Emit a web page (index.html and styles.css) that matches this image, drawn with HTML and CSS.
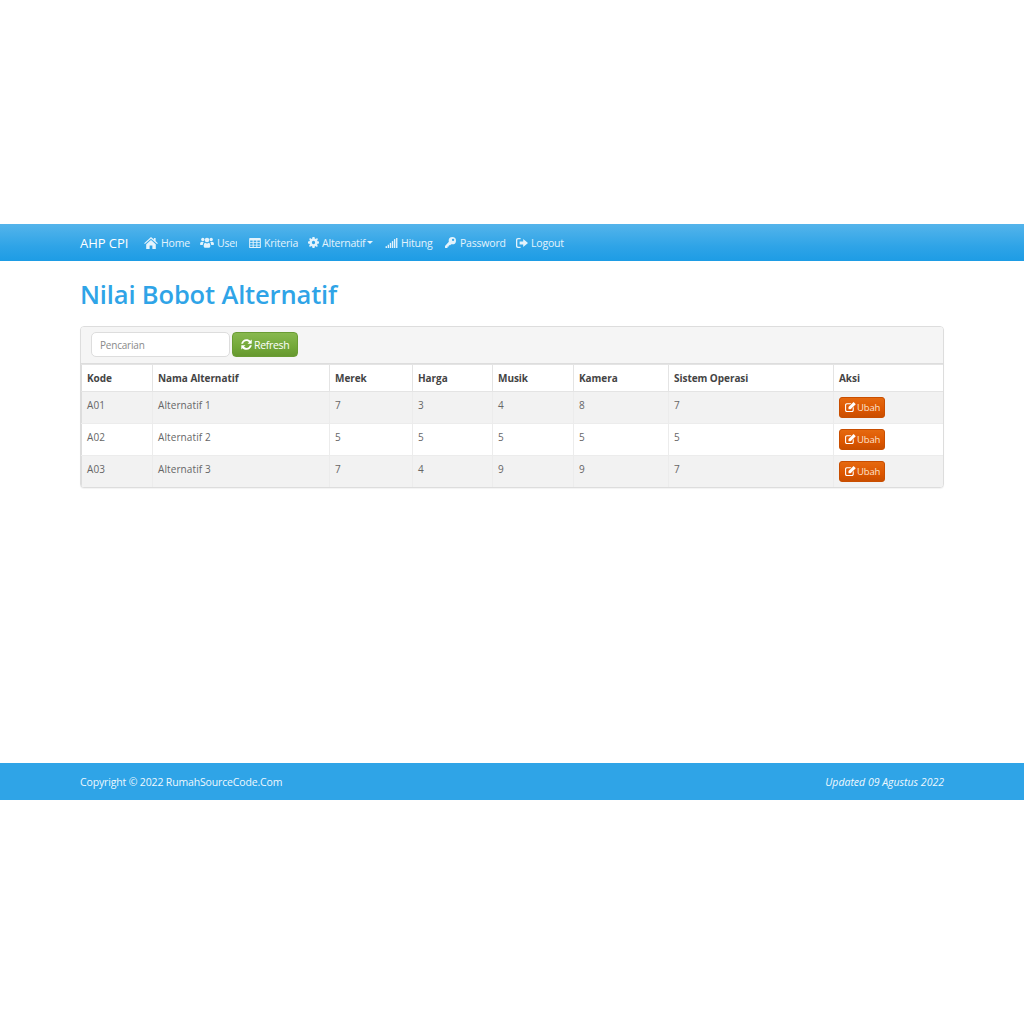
FILE: index.html
```html
<!DOCTYPE html>
<html lang="id">
<head>
<meta charset="utf-8">
<title>Nilai Bobot Alternatif</title>
<link rel="stylesheet" href="styles.css">
</head>
<body>
<svg class="sprite" width="0" height="0" aria-hidden="true">
  <symbol id="i-home" viewBox="0 0 16 14"><path d="M8 0 L11.4 3 V1.2 H13.4 V4.8 L16 7.2 L15.1 8.2 L8 2 L.9 8.2 L0 7.2 Z M2.4 8.4 L8 3.5 L13.6 8.4 V14 H9.6 V10 H6.4 V14 H2.4 Z"/></symbol>
  <symbol id="i-users" viewBox="0 0 16 12"><circle cx="3.2" cy="2.6" r="1.9"/><circle cx="12.8" cy="2.6" r="1.9"/><circle cx="8" cy="3.2" r="2.6"/><path d="M0 8.4 C0 6 1 5.2 2.4 5.2 C3 5.2 3.6 5.8 4.4 6 C3.6 6.8 3.2 7.6 3.2 8.8 H1 C.4 8.8 0 8.8 0 8.4 Z M16 8.4 C16 6 15 5.2 13.6 5.2 C13 5.2 12.4 5.8 11.6 6 C12.4 6.8 12.8 7.6 12.8 8.8 H15 C15.6 8.8 16 8.8 16 8.4 Z M4.2 10 C4.2 7.6 5 6.2 6 6.2 C6.6 6.7 7.2 7 8 7 C8.8 7 9.4 6.7 10 6.2 C11 6.2 11.8 7.6 11.8 10 C11.8 11.4 11 12 10 12 H6 C5 12 4.2 11.4 4.2 10 Z"/></symbol>
  <symbol id="i-table" viewBox="0 0 14 12"><path fill-rule="evenodd" d="M1 0 H13 A1 1 0 0 1 14 1 V11 A1 1 0 0 1 13 12 H1 A1 1 0 0 1 0 11 V1 A1 1 0 0 1 1 0 Z M1.2 3 V5 H4.2 V3 Z M5.4 3 V5 H8.6 V3 Z M9.8 3 V5 H12.8 V3 Z M1.2 6 V8 H4.2 V6 Z M5.4 6 V8 H8.6 V6 Z M9.8 6 V8 H12.8 V6 Z M1.2 9 V10.9 H4.2 V9 Z M5.4 9 V10.9 H8.6 V9 Z M9.8 9 V10.9 H12.8 V9 Z"/></symbol>
  <symbol id="i-cog" viewBox="0 0 12 12"><path fill-rule="evenodd" d="M4.9 0 H7.1 L7.4 1.6 L8.5 2.1 L9.9 1.2 L10.9 2.4 L9.9 3.6 L10.4 4.7 L12 4.9 V7.1 L10.4 7.4 L9.9 8.5 L10.8 9.9 L9.6 10.9 L8.4 9.9 L7.4 10.4 L7.1 12 H4.9 L4.6 10.4 L3.5 9.9 L2.1 10.8 L1.1 9.6 L2.1 8.4 L1.6 7.4 L0 7.1 V4.9 L1.6 4.6 L2.1 3.5 L1.2 2.1 L2.4 1.1 L3.6 2.1 L4.6 1.6 Z M6 4.2 A1.8 1.8 0 1 0 6 7.8 A1.8 1.8 0 1 0 6 4.2 Z"/></symbol>
  <symbol id="i-signal" viewBox="0 0 13 11"><rect x="0" y="9" width="1.5" height="2"/><rect x="2.3" y="7.4" width="1.5" height="3.6"/><rect x="4.6" y="5.4" width="1.5" height="5.6"/><rect x="6.9" y="3.4" width="1.5" height="7.6"/><rect x="9.2" y="1.2" width="1.5" height="9.8"/><rect x="11.5" y="0" width="1.5" height="11"/></symbol>
  <symbol id="i-key" viewBox="0 0 12 12"><path fill-rule="evenodd" d="M8 0 A4 4 0 0 1 8 8 C7.6 8 7.2 7.9 6.8 7.8 L5.6 9 H4.2 V10.4 H2.8 V11.6 L2.4 12 H.4 L0 11.6 V9.8 L4.2 5.2 C4.1 4.8 4 4.4 4 4 A4 4 0 0 1 8 0 Z M8.8 1.8 A1.3 1.3 0 1 0 8.8 4.4 A1.3 1.3 0 1 0 8.8 1.8 Z"/></symbol>
  <symbol id="i-logout" viewBox="0 0 12 10"><path d="M4.6 0 V1.3 H2.2 C1.6 1.3 1.3 1.7 1.3 2.2 V7.8 C1.3 8.3 1.6 8.7 2.2 8.7 H4.6 V10 H2 C.8 10 0 9.2 0 8 V2 C0 .8 .8 0 2 0 Z M7.2 1 L12 5 L7.2 9 V6.6 H3.6 V3.4 H7.2 Z"/></symbol>
  <symbol id="i-refresh" viewBox="0 0 12 12"><path d="M11.7 .6 V5.2 H7.1 L8.8 3.5 C8 2.7 7.1 2.3 6 2.3 C4.2 2.3 2.8 3.4 2.3 5.2 H.2 C.8 2.3 3.1 .2 6 .2 C7.7 .2 9.2 .9 10.3 2 Z M.3 11.4 V6.8 H4.9 L3.2 8.5 C4 9.3 4.9 9.7 6 9.7 C7.8 9.7 9.2 8.6 9.7 6.8 H11.8 C11.2 9.7 8.9 11.8 6 11.8 C4.3 11.8 2.8 11.1 1.7 10 Z"/></symbol>
  <symbol id="i-edit" viewBox="0 0 12 11"><path d="M1.8 1.4 H7 L5.8 2.6 H2.2 C1.6 2.6 1.2 3 1.2 3.6 V8.8 C1.2 9.4 1.6 9.8 2.2 9.8 H7.4 C8 9.8 8.4 9.4 8.4 8.8 V6.6 L9.6 5.4 V9 C9.6 10.2 8.8 11 7.6 11 H1.8 C.8 11 0 10.2 0 9 V3.4 C0 2.2 .8 1.4 1.8 1.4 Z"/><path d="M9.4 0 L11.8 2.4 L6.2 8 H3.8 V5.6 Z"/></symbol>
</svg>

<div class="page">
  <nav class="navbar">
    <div class="container nav-inner">
      <a class="brand">AHP CPI</a>
      <ul class="nav">
        <li class="nav-home"><svg class="ic ic-home"><use href="#i-home"/></svg>Home</li>
        <li class="nav-user"><svg class="ic ic-users"><use href="#i-users"/></svg>User</li>
        <li class="nav-kriteria"><svg class="ic ic-table"><use href="#i-table"/></svg>Kriteria</li>
        <li class="nav-alt"><svg class="ic ic-cog"><use href="#i-cog"/></svg>Alternatif<span class="caret"></span></li>
        <li class="nav-hitung"><svg class="ic ic-signal"><use href="#i-signal"/></svg>Hitung</li>
        <li class="nav-pass"><svg class="ic ic-key"><use href="#i-key"/></svg>Password</li>
        <li class="nav-logout"><svg class="ic ic-logout"><use href="#i-logout"/></svg>Logout</li>
      </ul>
    </div>
  </nav>

  <main class="container content">
    <h1 class="title">Nilai Bobot Alternatif</h1>
    <section class="panel">
      <form class="toolbar">
        <input class="search" type="text" placeholder="Pencarian">
        <a class="btn btn-refresh"><svg class="ic ic-btn"><use href="#i-refresh"/></svg>Refresh</a>
      </form>
      <table class="grid">
        <colgroup>
          <col class="c1"><col class="c2"><col class="c3"><col class="c4"><col class="c5"><col class="c6"><col class="c7"><col class="c8">
        </colgroup>
        <thead>
          <tr><th>Kode</th><th>Nama Alternatif</th><th>Merek</th><th>Harga</th><th>Musik</th><th>Kamera</th><th>Sistem Operasi</th><th>Aksi</th></tr>
        </thead>
        <tbody>
          <tr class="odd"><td>A01</td><td>Alternatif 1</td><td>7</td><td>3</td><td>4</td><td>8</td><td>7</td><td class="act"><a class="btn btn-edit"><svg class="ic ic-edit"><use href="#i-edit"/></svg>Ubah</a></td></tr>
          <tr><td>A02</td><td>Alternatif 2</td><td>5</td><td>5</td><td>5</td><td>5</td><td>5</td><td class="act"><a class="btn btn-edit"><svg class="ic ic-edit"><use href="#i-edit"/></svg>Ubah</a></td></tr>
          <tr class="odd"><td>A03</td><td>Alternatif 3</td><td>7</td><td>4</td><td>9</td><td>9</td><td>7</td><td class="act"><a class="btn btn-edit"><svg class="ic ic-edit"><use href="#i-edit"/></svg>Ubah</a></td></tr>
        </tbody>
      </table>
    </section>
  </main>

  <footer class="footer">
    <div class="container foot-inner">
      <span>Copyright © 2022 RumahSourceCode.Com</span>
      <em class="updated">Updated 09 Agustus 2022</em>
    </div>
  </footer>
</div>
</body>
</html>
```

FILE: styles.css
```css
* { box-sizing: border-box; }
html, body { margin: 0; padding: 0; background: #fff; }
body { font-family: "Open Sans", "Noto Sans", sans-serif; font-size: 10.5px; color: #555; }
.sprite { position: absolute; }
.page { padding-top: 224px; }
.container { width: 864px; margin: 0 auto; }

.navbar { height: 37px; background: linear-gradient(#54b4eb, #2fa4e7 60%, #1d9ce5); color: #fff; }
.nav-inner { display: flex; align-items: center; height: 100%; }
.brand { font-size: 13px; color: #fff; width: 64px; letter-spacing: -.05px; }
.nav { list-style: none; margin: 0; padding: 0; display: flex; align-items: center; color: #e4f3fc; font-size: 10.5px; letter-spacing: -.2px; }
.nav li { display: flex; align-items: center; white-space: nowrap; }
.ic { fill: currentColor; flex: none; }
.ic-home { width: 14px; height: 12px; margin-right: 3px; }
.ic-users { width: 14px; height: 11px; margin-right: 3px; }
.ic-table { width: 12px; height: 10px; margin-right: 3px; }
.ic-cog { width: 11px; height: 11px; margin-right: 3px; }
.ic-signal { width: 13px; height: 10px; margin-right: 3px; }
.ic-key { width: 11px; height: 11px; margin-right: 4px; }
.ic-logout { width: 12px; height: 10px; margin-right: 3px; }
.nav-home { width: 56px; }
.nav-user { width: 37px; margin-right: 12px; overflow: hidden; }
.nav-kriteria { width: 59px; }
.nav-alt { width: 77px; }
.nav-hitung { width: 60px; }
.nav-pass { width: 71px; }
.caret { display: inline-block; margin-left: 2px; border-top: 3px solid currentColor; border-left: 3px solid transparent; border-right: 3px solid transparent; }

.content { padding-top: 17px; }
.title { margin: 0 0 15px; font-size: 25.5px; line-height: 33px; font-weight: 600; color: #2fa4e7; letter-spacing: -.15px; }

.panel { border: 1px solid #ddd; border-radius: 4px; overflow: hidden; height: 162px; background: #fff; box-shadow: 0 1px 1px rgba(0,0,0,.05); }
.toolbar { display: flex; align-items: flex-start; height: 37px; padding: 5px 10px; background: #f5f5f5; border-bottom: 1px solid #ddd; gap: 2px; }
.search { width: 139px; height: 25px; padding: 0 8px; border: 1px solid #ddd; border-radius: 5px; background: #fff; font: 10px "Open Sans", sans-serif; letter-spacing: -.2px; color: #555; }
.search::placeholder { color: #8a8a8a; opacity: 1; }
.btn { display: inline-flex; align-items: center; color: #fff; white-space: nowrap; }
.btn-refresh { width: 66px; height: 25px; padding-left: 8px; border-radius: 4px; background: linear-gradient(#88b84f, #73a839 60%, #66982f); border: 1px solid #6a9c34; font-size: 10.5px; letter-spacing: -.3px; }
.ic-btn { width: 11px; height: 11px; margin-right: 2px; }

.grid { table-layout: fixed; width: 862px; border-collapse: collapse; font-size: 10px; letter-spacing: .1px; }
.c1 { width: 71px; } .c2 { width: 177px; } .c3 { width: 83px; } .c4 { width: 80px; }
.c5 { width: 81px; } .c6 { width: 95px; } .c7 { width: 165px; } .c8 { width: 110px; }
.grid th, .grid td { text-align: left; padding: 0 5px; border: 1px solid #ececec; }
.grid th { height: 27px; color: #444; font-weight: 700; background: #fff; border-color: #e4e4e4; letter-spacing: -.05px; }
.grid td { height: 32px; vertical-align: top; padding-top: 6px; color: #666; }
.grid td.act { padding-top: 5px; }
.grid th:first-child, .grid td:first-child { border-left: 1px solid #ddd; }
.grid th:last-child, .grid td:last-child { border-right: 0; }
.grid tbody tr:last-child td { border-bottom: 0; }
.odd td { background: #f2f2f2; }
.btn-edit { width: 46px; height: 21px; padding: 0 0 1px 5px; border-radius: 3px; background: linear-gradient(#e5690f, #dd5600 60%, #c94e00); border: 1px solid #c94e00; color: #fbe3cf; font-size: 9.5px; letter-spacing: -.15px; }
.ic-edit { width: 11px; height: 10px; margin-right: 1px; color: #fff; }

.footer { margin-top: 275px; height: 37px; background: #2fa4e7; color: #eef8fe; font-size: 10.5px; letter-spacing: -.15px; }
.foot-inner { display: flex; justify-content: space-between; align-items: center; height: 100%; }
.updated { letter-spacing: 0; }
```
